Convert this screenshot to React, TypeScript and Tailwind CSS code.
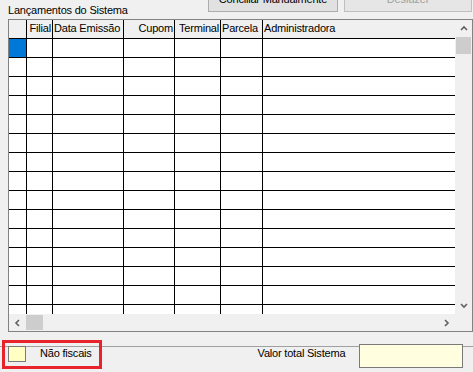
import React from "react"

const COLUMNS = [
    { key: "fixo", label: "", width: "w-[18px]", align: "text-left" },
    { key: "filial", label: "Filial", width: "w-[26px]", align: "text-right" },
    { key: "emissao", label: "Data Emissão", width: "w-[71px]", align: "text-left" },
    { key: "cupom", label: "Cupom", width: "w-[51px]", align: "text-right" },
    { key: "terminal", label: "Terminal", width: "w-[46px]", align: "text-right" },
    { key: "parcela", label: "Parcela", width: "w-[42px]", align: "text-left" },
    { key: "adm", label: "Administradora", width: "flex-1", align: "text-left" }
]

const ROWS = Array.from({ length: 15 }, (_, i) => i)

const Chevron = ({ dir }: { dir: "up" | "down" | "left" | "right" }) => {
    const paths = {
        up: "M1 5 L4 2 L7 5",
        down: "M1 2 L4 5 L7 2",
        left: "M5 1 L2 4 L5 7",
        right: "M2 1 L5 4 L2 7"
    }
    return (
        <svg width="8" height="8" viewBox="0 0 8 8">
            <path d={paths[dir]} fill="none" stroke="#606060" strokeWidth="1.6" />
        </svg>
    )
}

const WinButton = ({ label, disabled, width }: { label: string; disabled?: boolean; width: string }) => (
    <div
        className={`flex h-[25px] items-center justify-center border ${width} ${
            disabled ? "border-[#bfbfbf] bg-[#e6e6e6] text-[#a0a0a0]" : "border-[#adadad] bg-[#e1e1e1] text-black"
        }`}
    >
        {label}
    </div>
)

export default function App() {
    return (
        <div
            className="relative h-[372px] w-[473px] overflow-hidden bg-[#f0f0f0] text-[11px] leading-[13px] tracking-[-0.2px] text-black"
            style={{ fontFamily: '"Liberation Sans", Arial, sans-serif' }}
        >
            {/* cabeçalho com botões */}
            <div className="flex h-[19px] pr-px">
                <span className="pt-[4px] pl-2">Lançamentos do Sistema</span>
                <div className="-mt-[13px] ml-auto flex gap-[6px]">
                    <WinButton label="Conciliar Manualmente" width="w-[130px]" />
                    <WinButton label="Desfazer" width="w-[128px]" disabled />
                </div>
            </div>

            {/* grade */}
            <div className="ml-2 flex h-[313px] w-[465px] flex-col border border-[#828282] bg-white">
                <div className="flex h-[294px]">
                    <div className="flex-1 overflow-hidden">
                        <div className="flex h-[19px] bg-[#f0f0f0]">
                            {COLUMNS.map((c, idx) => (
                                <div
                                    key={c.key}
                                    className={`${c.width} ${c.align} overflow-hidden whitespace-nowrap border-black border-b px-[1px] pt-[2px] ${
                                        idx < COLUMNS.length - 1 ? "border-r" : ""
                                    }`}
                                >
                                    {c.label}
                                </div>
                            ))}
                        </div>
                        {ROWS.map((r) => (
                            <div key={r} className="flex h-[19px]">
                                {COLUMNS.map((c, idx) => (
                                    <div
                                        key={c.key}
                                        className={`${c.width} border-black border-b ${idx < COLUMNS.length - 1 ? "border-r" : ""} ${
                                            r === 0 && idx === 0 ? "bg-[#0078d7]" : ""
                                        }`}
                                    />
                                ))}
                            </div>
                        ))}
                    </div>
                    {/* barra vertical */}
                    <div className="flex w-[17px] flex-col bg-[#f0f0f0]">
                        <div className="flex h-[17px] items-center justify-center">
                            <Chevron dir="up" />
                        </div>
                        <div className="mx-px h-[17px] bg-[#cdcdcd]" />
                        <div className="flex-1" />
                        <div className="flex h-[17px] items-center justify-center">
                            <Chevron dir="down" />
                        </div>
                    </div>
                </div>
                {/* barra horizontal */}
                <div className="flex h-[17px] bg-[#f0f0f0]">
                    <div className="flex w-[17px] items-center justify-center">
                        <Chevron dir="left" />
                    </div>
                    <div className="my-px w-[17px] bg-[#cdcdcd]" />
                    <div className="flex-1" />
                    <div className="flex w-[17px] items-center justify-center">
                        <Chevron dir="right" />
                    </div>
                    <div className="w-[17px]" />
                </div>
            </div>

            {/* rodapé */}
            <div className="mt-[14px] flex h-[26px] border-[#a0a0a0] border-t">
                <div className="-mt-px ml-2 h-[16px] w-[18px] border border-[#7a7a7a] bg-[#ffffc4]" />
                <span className="ml-[14px]">Não fiscais</span>
                <span className="ml-[166px]">Valor total Sistema</span>
                <div className="-mt-[3px] ml-auto mr-[10px] h-[24px] w-[104px] border border-[#7a7a7a] bg-[#ffffe0]" />
            </div>

            {/* destaque vermelho */}
            <div className="absolute top-[340px] left-[2px] h-[29px] w-[100px] border-[3px] border-[#e8232b]" />
        </div>
    )
}
